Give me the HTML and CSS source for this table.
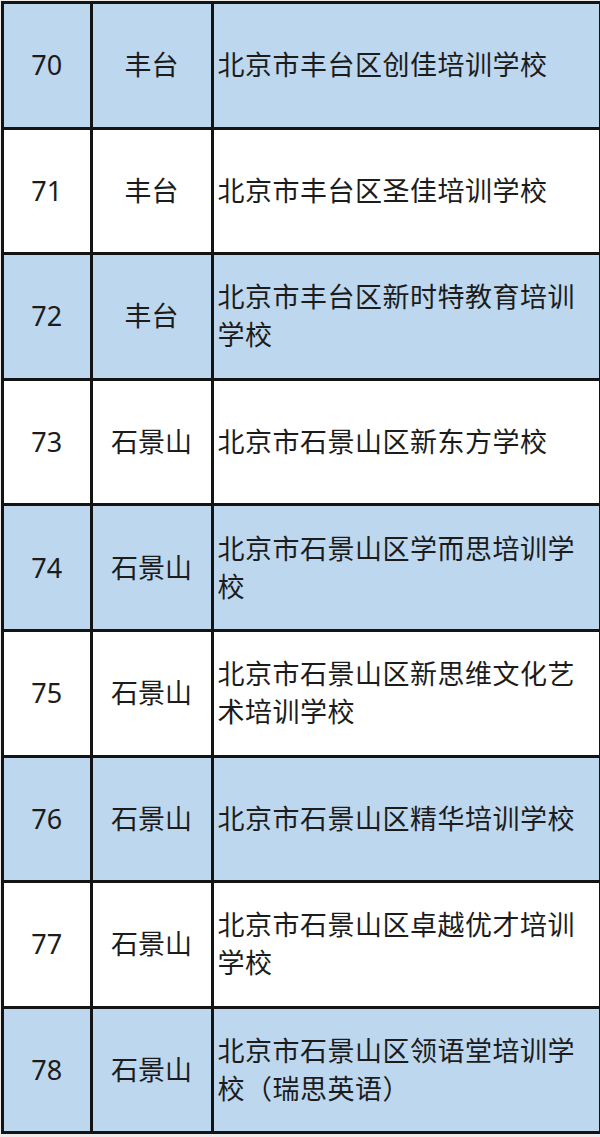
FILE: index.html
```html
<!DOCTYPE html>
<html lang="zh-CN">
<head>
<meta charset="utf-8">
<link rel="stylesheet" href="styles.css">
</head>
<body>
<table class="list">
  <colgroup><col class="c-no"><col class="c-area"><col class="c-name"></colgroup>
  <tr class="blue"><td class="no">70</td><td class="area">丰台</td><td class="name">北京市丰台区创佳培训学校</td></tr>
  <tr><td class="no">71</td><td class="area">丰台</td><td class="name">北京市丰台区圣佳培训学校</td></tr>
  <tr class="blue"><td class="no">72</td><td class="area">丰台</td><td class="name">北京市丰台区新时特教育培训学校</td></tr>
  <tr><td class="no">73</td><td class="area">石景山</td><td class="name">北京市石景山区新东方学校</td></tr>
  <tr class="blue"><td class="no">74</td><td class="area">石景山</td><td class="name">北京市石景山区学而思培训学校</td></tr>
  <tr><td class="no">75</td><td class="area">石景山</td><td class="name">北京市石景山区新思维文化艺术培训学校</td></tr>
  <tr class="blue"><td class="no">76</td><td class="area">石景山</td><td class="name">北京市石景山区精华培训学校</td></tr>
  <tr><td class="no">77</td><td class="area">石景山</td><td class="name">北京市石景山区卓越优才培训学校</td></tr>
  <tr class="blue"><td class="no">78</td><td class="area">石景山</td><td class="name">北京市石景山区领语堂培训学校（瑞思英语）</td></tr>
</table>
</body>
</html>
```

FILE: styles.css
```css
html, body {
  margin: 0;
  padding: 0;
  background: #ececec;
}
body {
  padding: 1px 0 0 1px;
  font-family: "Noto Sans", "Noto Sans CJK SC", sans-serif;
  color: #1c1c1c;
}
.list {
  border-collapse: collapse;
  table-layout: fixed;
  width: 598px;
  background: #ffffff;
}
.c-no { width: 88.5px; }
.c-area { width: 121px; }
.c-name { width: 388.5px; }
.list td {
  border: 3px solid #141414;
  height: 122.6px;
  padding: 0;
  font-size: 27px;
  line-height: 38px;
  vertical-align: middle;
}
.list tr.blue td {
  background: #bdd7ee;
}
.list td.no,
.list td.area {
  text-align: center;
}
.list td.name {
  padding-left: 4px;
  padding-right: 2px;
  letter-spacing: 0.5px;
}
```
